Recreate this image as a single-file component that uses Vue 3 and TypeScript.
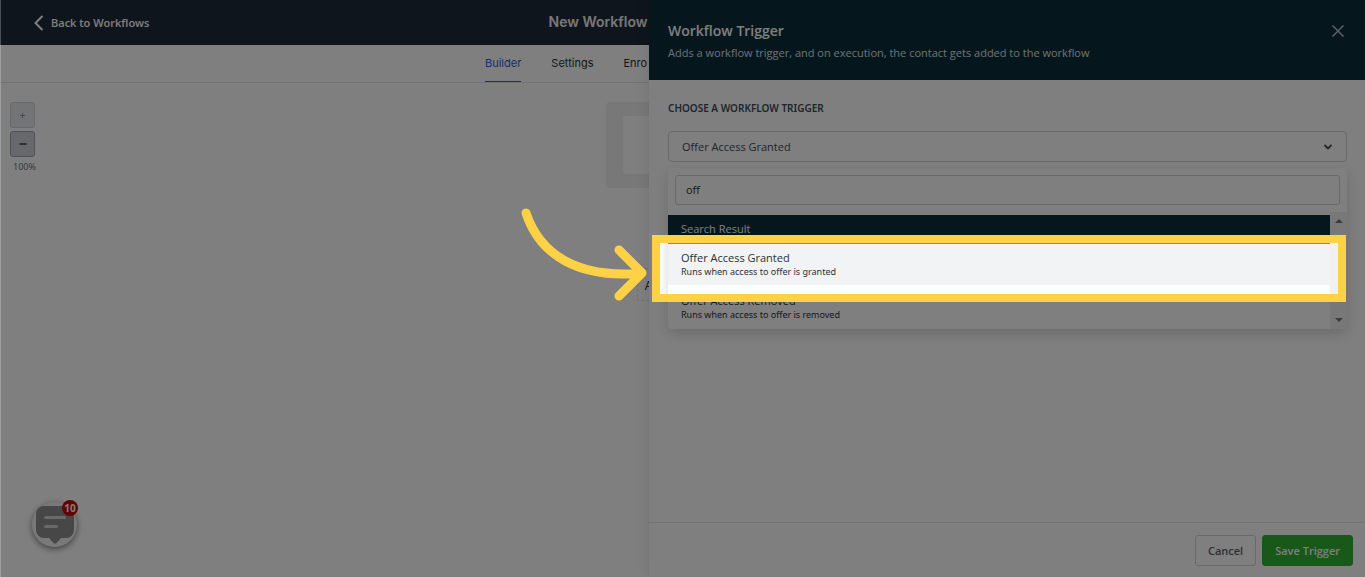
<script setup lang="ts">
import { ref } from 'vue'

interface TriggerOption {
  title: string
  description: string
}

const tabs = ['Builder', 'Settings', 'Enro']
const activeTab = ref('Builder')
const options: TriggerOption[] = [
  { title: 'Offer Access Granted', description: 'Runs when access to offer is granted' },
  { title: 'Offer Access Removed', description: 'Runs when access to offer is removed' },
]
const selected = ref(options[0].title)
const query = ref('off')
</script>

<template>
  <div class="page">
    <header class="topbar">
      <a class="back" href="#">
        <svg width="10" height="16" viewBox="0 0 10 16" aria-hidden="true">
          <path d="M8.5 1 1.5 8l7 7" fill="none" stroke="currentColor" stroke-width="2" />
        </svg>
        <span>Back to Workflows</span>
      </a>
      <h1 class="name">New Workflow</h1>
    </header>

    <nav class="tabs">
      <div class="tab-list">
        <button
          v-for="tab in tabs"
          :key="tab"
          type="button"
          class="tab"
          :class="{ active: tab === activeTab }"
          @click="activeTab = tab"
        >{{ tab }}</button>
      </div>
    </nav>

    <main class="canvas">
      <div class="zoom">
        <button type="button" class="zoom-btn disabled" disabled aria-label="Zoom in">
          <svg width="7" height="7" viewBox="0 0 7 7"><path d="M3.5 1v5M1 3.5h5" stroke="currentColor" /></svg>
        </button>
        <button type="button" class="zoom-btn" aria-label="Zoom out">
          <svg width="8" height="8" viewBox="0 0 8 8"><path d="M.5 4h7" stroke="currentColor" stroke-width="2" /></svg>
        </button>
        <span class="zoom-level">100%</span>
      </div>
      <div class="flow">
        <div class="trigger-card"><div class="trigger-inner"></div></div>
        <div class="action-card">A</div>
      </div>
    </main>

    <button type="button" class="chat" aria-label="Messages">
      <svg width="38" height="38" viewBox="0 0 38 38" aria-hidden="true">
        <path
          d="M8 0h22a8 8 0 0 1 8 8v16a8 8 0 0 1-8 8h-5l-4.500 5q-1.500 1.500-3 0L13 32H8a8 8 0 0 1-8-8V8a8 8 0 0 1 8-8z"
          fill="#8e8e8e"
        />
        <path d="M9.500 11.500h19M9.500 20.500h11" stroke="#d4d4d4" stroke-width="3" stroke-linecap="round" />
      </svg>
      <span class="count">10</span>
    </button>

    <aside class="drawer">
      <div class="drawer-head">
        <div>
          <h2>Workflow Trigger</h2>
          <p>Adds a workflow trigger, and on execution, the contact gets added to the workflow</p>
        </div>
        <button type="button" class="close" aria-label="Close">
          <svg width="12" height="12" viewBox="0 0 12 12"><path d="m.5.5 11 11M11.500.5l-11 11" stroke="currentColor" stroke-width="1.500" /></svg>
        </button>
      </div>

      <div class="drawer-body">
        <label class="caption" for="trigger">CHOOSE A WORKFLOW TRIGGER</label>
        <div class="field">
          <select id="trigger" v-model="selected">
            <option v-for="o in options" :key="o.title">{{ o.title }}</option>
          </select>
          <svg class="chevron" width="10" height="6" viewBox="0 0 10 6" aria-hidden="true">
            <path d="m1.500 1 3.500 3.500L8.500 1" fill="none" stroke="currentColor" stroke-width="1.800" />
          </svg>
        </div>

        <div class="menu">
          <div class="search"><input v-model="query" type="text" aria-label="Search triggers" /></div>
          <div class="results">
            <div class="list">
              <div class="group">Search Result</div>
              <button
                v-for="o in options"
                :key="o.title"
                type="button"
                class="option"
                :class="{ chosen: o.title === selected }"
                @click="selected = o.title"
              >
                <span class="option-title">{{ o.title }}</span>
                <span class="option-text">{{ o.description }}</span>
              </button>
            </div>
            <div class="scrollbar" aria-hidden="true">
              <svg width="8" height="4" viewBox="0 0 8 4"><path d="M0 4 4 0l4 4z" fill="currentColor" /></svg>
              <svg width="8" height="4" viewBox="0 0 8 4"><path d="m0 0 4 4 4-4z" fill="currentColor" /></svg>
            </div>
          </div>
        </div>
      </div>

      <footer class="drawer-foot">
        <button type="button" class="btn">Cancel</button>
        <button type="button" class="btn primary">Save Trigger</button>
      </footer>

      <div class="spotlight"></div>
      <svg class="arrow" width="130" height="96" viewBox="0 0 130 96" aria-hidden="true">
        <path
          d="M6 7C20 49 58 73 122 67M99 44l23 23-23 23"
          fill="none"
          stroke="#ffd147"
          stroke-width="9"
          stroke-linecap="round"
          stroke-linejoin="round"
        />
      </svg>
    </aside>
  </div>
</template>

<style>
body {
  margin: 0;
}
</style>

<style scoped>
* {
  box-sizing: border-box;
}
.page {
  position: relative;
  display: flex;
  flex-direction: column;
  height: 100vh;
  overflow: hidden;
  background: #fff;
  color: #2a3135;
  font-family: "Open Sans", "Noto Sans", sans-serif;
  font-size: 11px;
}
.page::after {
  content: "";
  position: absolute;
  inset: 0 auto 0 0;
  width: 1px;
  background: rgba(255, 255, 255, 0.25);
}
button,
input,
select {
  font: inherit;
  color: inherit;
  margin: 0;
}
h1,
h2,
p {
  margin: 0;
}
.topbar {
  display: flex;
  align-items: center;
  justify-content: center;
  height: 45px;
  flex: none;
  background: #1f2a3a;
  color: #fff;
}
.back {
  position: absolute;
  left: 34px;
  display: flex;
  align-items: center;
  gap: 7px;
  color: #fff;
  font-weight: 600;
  text-decoration: none;
}
.name {
  width: 268px;
  padding-bottom: 1px;
  color: #f0f0f0;
  font: 600 14px/20px Inter, sans-serif;
}
.tabs {
  display: flex;
  justify-content: flex-end;
  flex: none;
  height: 38px;
  padding-right: 716px;
  border-bottom: 1px solid #e4e6ea;
}
.tab-list {
  display: flex;
  gap: 30px;
  width: 164px;
}
.tab {
  flex: none;
  padding: 0;
  border: 0;
  border-bottom: 1px solid transparent;
  background: none;
  font-family: Inter, sans-serif;
  white-space: nowrap;
}
.tab.active {
  color: #2a5bd7;
  border-color: #2a5bd7;
}
.canvas {
  flex: 1;
  display: flex;
  justify-content: center;
  padding-top: 19px;
}
.zoom {
  position: absolute;
  left: 10px;
  display: flex;
  flex-direction: column;
  gap: 3px;
}
.zoom-btn {
  display: grid;
  place-items: center;
  width: 25px;
  height: 26px;
  padding: 0;
  border: 1px solid #9da5b0;
  border-radius: 3px;
  background: #cdd0d8;
  color: #5a606b;
}
.zoom-btn.disabled {
  border-color: #ced2d9;
  background: #e6e8ec;
  color: #8f959e;
}
.zoom-level {
  padding-left: 3px;
  color: #70757c;
  font-family: "Noto Sans", sans-serif;
  font-size: 9px;
  line-height: 14px;
}
.flow {
  display: flex;
  flex-direction: column;
  align-items: center;
  gap: 80px;
}
.trigger-card {
  width: 154px;
  height: 86px;
  padding: 14px 17px;
  border-radius: 4px;
  background: #f0f1f2;
}
.trigger-inner {
  height: 58px;
  border-radius: 3px;
  background: #fff;
}
.action-card {
  width: 92px;
  height: 33px;
  padding: 0 7px;
  border: 1px dashed #e4e6ea;
  border-radius: 3px;
  font: 12px/34px Inter, sans-serif;
}
.chat {
  position: absolute;
  left: 32px;
  bottom: 30px;
  display: grid;
  place-items: center;
  width: 45px;
  height: 45px;
  padding: 0;
  border: 0;
  border-radius: 50%;
  background: #f2f2f2;
  box-shadow: 0 2px 6px rgba(0, 0, 0, 0.5);
}
.count {
  position: absolute;
  top: -2px;
  right: -1px;
  width: 16px;
  height: 16px;
  border-radius: 50%;
  background: #c80000;
  color: #fff;
  font-size: 10px;
  font-weight: 700;
  line-height: 16px;
}
.drawer {
  position: absolute;
  inset: 0 0 0 auto;
  display: flex;
  flex-direction: column;
  width: 716px;
  background: #fff;
  box-shadow: 0 0 14px rgba(0, 0, 0, 0.12);
}
.drawer-head {
  display: flex;
  justify-content: space-between;
  align-items: flex-start;
  height: 80px;
  padding: 22px 21px 0 19px;
  background: #0b2d3b;
  color: #fff;
}
.drawer-head h2 {
  font-size: 14px;
  font-weight: 600;
  line-height: 18px;
}
.drawer-head p {
  margin-top: 4px;
  color: #dce2e6;
  line-height: 18px;
}
.close {
  display: flex;
  padding: 3px 0;
  border: 0;
  background: none;
  color: #b9bfd3;
}
.drawer-body {
  flex: 1;
  padding: 20px 18px 0 19px;
}
.caption {
  display: block;
  margin-bottom: 15px;
  color: #424b57;
  font-family: "Noto Sans", sans-serif;
  font-size: 10px;
  font-weight: 600;
  line-height: 16px;
}
.field {
  position: relative;
  color: #424b57;
}
.field select {
  display: block;
  width: 100%;
  height: 31px;
  padding: 0 13px;
  appearance: none;
  border: 1px solid #ced2d9;
  border-radius: 4px;
  background: #fff;
}
.chevron {
  position: absolute;
  top: 13px;
  right: 14px;
}
.menu {
  margin-top: 6px;
  border-radius: 4px;
  background: #fff;
  box-shadow: 0 5px 14px rgba(0, 0, 0, 0.16);
}
.search {
  padding: 7px 7px;
}
.search input {
  display: block;
  width: 100%;
  height: 30px;
  padding: 0 10px 2px;
  border: 1px solid #ced2d9;
  border-radius: 3px;
  background: #fff;
  outline: 0;
}
.results {
  display: flex;
}
.list {
  flex: 1;
  padding: 3px 0 1px;
}
.group {
  height: 29px;
  padding-left: 13px;
  border-bottom: 1px solid #8a8a80;
  background: #0b2d3b;
  color: #fff;
  line-height: 28px;
}
.option {
  display: flex;
  flex-direction: column;
  justify-content: center;
  width: 100%;
  height: 42px;
  padding: 0 13px;
  border: 0;
  background: #fff;
  text-align: left;
}
.option.chosen {
  border-bottom: 1px solid #fff;
  background: #f2f3f5;
}
.option-title {
  line-height: 15px;
}
.option-text {
  font-family: "Noto Sans", sans-serif;
  font-size: 9px;
  line-height: 14px;
}
.scrollbar {
  display: flex;
  flex-direction: column;
  justify-content: space-between;
  align-items: center;
  width: 17px;
  padding: 7px 0;
  background: #f1f1f1;
  color: #777;
}
.drawer-foot {
  display: flex;
  justify-content: flex-end;
  gap: 6px;
  padding: 12px 12px 11px;
  border-top: 1px solid #e4e6ea;
}
.btn {
  height: 31px;
  padding: 0 12px;
  border: 1px solid #ced2d9;
  border-radius: 3px;
  background: #fff;
  color: #596069;
  font-weight: 600;
}
.btn.primary {
  border-color: #30b030;
  background: #30b030;
  color: #fff;
}
.spotlight {
  position: absolute;
  top: 235px;
  left: 3px;
  right: 19px;
  height: 67px;
  border: 8px solid #ffd147;
  box-shadow: 0 0 0 200vmax rgba(0, 0, 0, 0.5);
  pointer-events: none;
}
.arrow {
  position: absolute;
  top: 206px;
  left: -129px;
  pointer-events: none;
}
</style>
